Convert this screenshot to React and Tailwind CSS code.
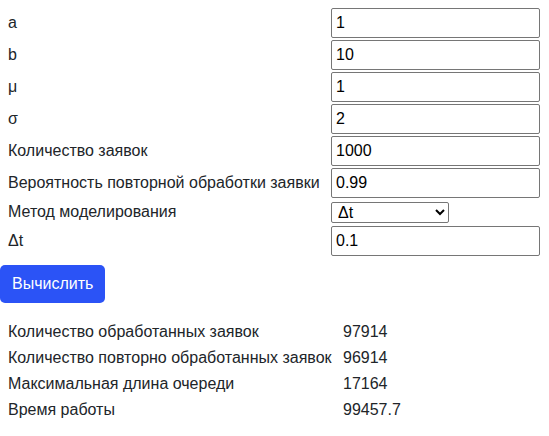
import React, { useState } from 'react';

const fields = [
  { key: 'a', label: 'a', value: '1' },
  { key: 'b', label: 'b', value: '10' },
  { key: 'mu', label: 'μ', value: '1' },
  { key: 'sigma', label: 'σ', value: '2' },
  { key: 'count', label: 'Количество заявок', value: '1000' },
  { key: 'p', label: 'Вероятность повторной обработки заявки', value: '0.99' },
];

const results = [
  ['Количество обработанных заявок', '97914'],
  ['Количество повторно обработанных заявок', '96914'],
  ['Максимальная длина очереди', '17164'],
  ['Время работы', '99457.7'],
];

const inputClass =
  'w-[209px] h-[30px] border border-[#767676] rounded-[2px] pl-[4px] text-base text-black bg-white outline-none';

const App = () => {
  const [values, setValues] = useState(
    Object.fromEntries(fields.map((f) => [f.key, f.value]))
  );
  const [method, setMethod] = useState('dt');
  const [dt, setDt] = useState('0.1');

  return (
    <div className="w-[549px] h-[436px] bg-white text-[#212529] text-base font-['Liberation_Sans',Arial,sans-serif]">
      <div className="pl-2 pt-2 grid grid-cols-[312px_209px] gap-x-[11px] gap-y-[2px] items-center">
        {fields.map((f) => (
          <React.Fragment key={f.key}>
            <label htmlFor={f.key} className="leading-6">
              {f.label}
            </label>
            <input
              id={f.key}
              type="text"
              value={values[f.key]}
              onChange={(e) => setValues({ ...values, [f.key]: e.target.value })}
              className={inputClass}
            />
          </React.Fragment>
        ))}

        <label htmlFor="method" className="leading-6 h-6">
          Метод моделирования
        </label>
        <div className="h-6 flex items-center">
          <select
            id="method"
            value={method}
            onChange={(e) => setMethod(e.target.value)}
            className="w-[118px] h-[21px] border border-[#767676] rounded-[2px] text-base text-black bg-white pl-[2px]"
          >
            <option value="dt">Δt</option>
            <option value="event">Событийный</option>
          </select>
        </div>

        <label htmlFor="dt" className="leading-6">
          Δt
        </label>
        <input
          id="dt"
          type="text"
          value={dt}
          onChange={(e) => setDt(e.target.value)}
          className={inputClass}
        />
      </div>

      <button
        type="button"
        className="mt-[9px] h-[38px] px-3 rounded-[5px] bg-[#2b53f6] text-white text-base leading-6"
      >
        Вычислить
      </button>

      {/* Results */}
      <div className="pl-2 mt-[17px] grid grid-cols-[335px_auto] gap-y-[2px]">
        {results.map(([label, value]) => (
          <React.Fragment key={label}>
            <div className="leading-6">{label}</div>
            <div className="leading-6">{value}</div>
          </React.Fragment>
        ))}
      </div>
    </div>
  );
};

export default App;
